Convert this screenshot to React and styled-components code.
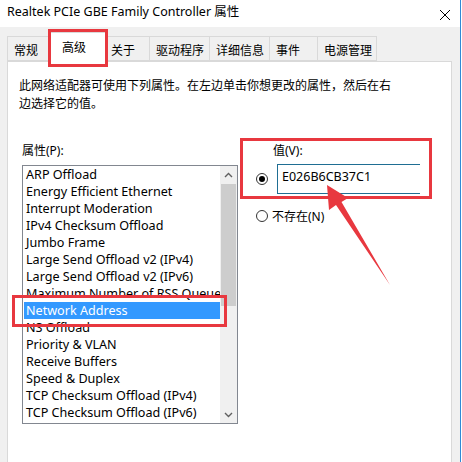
import React from "react";
import styled, { createGlobalStyle } from "styled-components";

const GlobalStyle = createGlobalStyle`
   html, body {
      margin: 0;
      padding: 0;
      background: #ffffff;
   }
   body {
      font-family: "Noto Sans", "Noto Sans CJK SC", sans-serif;
      font-size: 12px;
      color: #000000;
   }
`;

const Window = styled.div`
   position: relative;
   width: 460px;
   height: 462px;
   overflow: hidden;
   background-color: #f0f0f0;
   border-right: 1px solid #2f8ad6;
`;

const TitleBar = styled.div`
   height: 27px;
   background-color: #ffffff;
   display: flex;
   align-items: flex-start;
   justify-content: space-between;
   padding: 3px 0 0 7px;
   box-sizing: border-box;
`;

const Title = styled.div`
   font-size: 12.5px;
   line-height: 18px;
`;

const CloseButton = styled.div`
   width: 10px;
   height: 10px;
   margin: 4px 10px 0 0;
`;

const Body = styled.div`
   padding: 9px 8px 0 7px;
`;

const TabRow = styled.div`
   display: flex;
   align-items: flex-end;
   height: 25px;
   position: relative;
   z-index: 2;
`;

const Tab = styled.div`
   width: ${(p) => p.$w}px;
   box-sizing: border-box;
   height: ${(p) => (p.$active ? 30 : 25)}px;
   margin-bottom: ${(p) => (p.$active ? -1 : 0)}px;
   padding-left: ${(p) => (p.$active ? 11 : 6)}px;
   background-color: ${(p) => (p.$active ? "#ffffff" : "#f0f0f0")};
   border: 1px solid #d9d9d9;
   border-bottom: ${(p) => (p.$active ? "none" : "1px solid #d9d9d9")};
   border-left: ${(p) => (p.$first || p.$active ? "1px solid #d9d9d9" : "none")};
   line-height: ${(p) => (p.$active ? 30 : 25)}px;
   font-size: 12px;
   white-space: nowrap;
   padding-top: ${(p) => (p.$active ? 0 : 1)}px;
   ${(p) => (p.$active ? "margin-left: 1px; margin-right: -1px;" : "")}
`;

const Panel = styled.div`
   background-color: #ffffff;
   border: 1px solid #d9d9d9;
   height: 420px;
   padding: 15px 11px 0 11px;
`;

const Description = styled.p`
   margin: 0;
   font-size: 12px;
   line-height: 18px;
   width: 380px;
`;

const Columns = styled.div`
   display: grid;
   grid-template-columns: 216px 1fr;
   column-gap: 18px;
   margin-top: 30px;
   padding-left: 3px;
`;

const FieldLabel = styled.div`
   font-size: 12px;
   line-height: 18px;
   margin-left: ${(p) => p.$indent || 0}px;
   margin-bottom: ${(p) => p.$below ?? 5}px;
   margin-top: -1px;
`;

const ListBox = styled.div`
   position: relative;
   height: 259px;
   box-sizing: border-box;
   border: 1px solid #828790;
   overflow: hidden;
`;

const ListItem = styled.div`
   height: 17px;
   line-height: 17px;
   width: 194px;
   padding-left: 2px;
   margin-left: 1px;
   font-size: 12.6px;
   white-space: nowrap;
   overflow: hidden;
   background-color: ${(p) => (p.$selected ? "#3399ff" : "transparent")};
   color: ${(p) => (p.$selected ? "#ffffff" : "#000000")};
`;

const ScrollBar = styled.div`
   position: absolute;
   top: 0;
   right: 0;
   width: 17px;
   height: 100%;
   background-color: #f0f0f0;
   display: flex;
   flex-direction: column;
   align-items: center;
`;

const ScrollArrow = styled.div`
   height: 17px;
   width: 17px;
   display: flex;
   align-items: center;
   justify-content: center;
`;

const ScrollThumb = styled.div`
   width: 15px;
   height: 122px;
   margin-top: 1px;
   background-color: #cdcdcd;
`;

const ScrollTrack = styled.div`
   flex: 1;
`;

const ValueColumn = styled.div`
   display: flex;
   flex-direction: column;
`;

const RadioRow = styled.div`
   display: flex;
   align-items: center;
   gap: ${(p) => p.$gap || 0}px;
   margin-top: ${(p) => p.$top || 0}px;
`;

const Radio = styled.div`
   width: 12px;
   height: 12px;
   box-sizing: border-box;
   border: 1px solid #333333;
   border-radius: 50%;
   display: flex;
   align-items: center;
   justify-content: center;
   flex-shrink: 0;

   &::after {
      content: "";
      width: 6px;
      height: 6px;
      border-radius: 50%;
      background-color: ${(p) => (p.$checked ? "#000000" : "transparent")};
   }
`;

const TextBox = styled.div`
   width: 143px;
   height: 30px;
   box-sizing: border-box;
   border: 1px solid #1f6e93;
   border-right: none;
   padding: 2px 0 0 4px;
   line-height: 20px;
   font-size: 12.5px;
`;

const Highlight = styled.div`
   position: absolute;
   left: ${(p) => p.$x}px;
   top: ${(p) => p.$y}px;
   width: ${(p) => p.$w}px;
   height: ${(p) => p.$h}px;
   box-sizing: border-box;
   border: 3px solid #e8383f;
   z-index: 5;
   pointer-events: none;
`;

const ArrowLayer = styled.svg`
   position: absolute;
   left: 0;
   top: 0;
   z-index: 6;
   pointer-events: none;
`;

const tabs = [
   { name: "常规", w: 42 },
   { name: "高级", w: 56, active: true },
   { name: "关于", w: 45 },
   { name: "驱动程序", w: 60 },
   { name: "详细信息", w: 60 },
   { name: "事件", w: 48 },
   { name: "电源管理", w: 59 }
];

const properties = [
   "ARP Offload",
   "Energy Efficient Ethernet",
   "Interrupt Moderation",
   "IPv4 Checksum Offload",
   "Jumbo Frame",
   "Large Send Offload v2 (IPv4)",
   "Large Send Offload v2 (IPv6)",
   "Maximum Number of RSS Queues",
   "Network Address",
   "NS Offload",
   "Priority & VLAN",
   "Receive Buffers",
   "Speed & Duplex",
   "TCP Checksum Offload (IPv4)",
   "TCP Checksum Offload (IPv6)"
];

const Chevron = ({ up }) => (
   <svg width="9" height="6" viewBox="0 0 9 6">
      <path
         d={up ? "M1 5 L4.5 1.5 L8 5" : "M1 1 L4.5 4.5 L8 1"}
         fill="none"
         stroke="#606060"
         strokeWidth="1.4"
      />
   </svg>
);

export default function App() {
   return (
      <>
         <GlobalStyle />
         <Window>
            <TitleBar>
               <Title>Realtek PCIe GBE Family Controller 属性</Title>
               <CloseButton>
                  <svg width="10" height="10" viewBox="0 0 10 10">
                     <path
                        d="M0 0 L10 10 M10 0 L0 10"
                        stroke="#000"
                        strokeWidth="1"
                     />
                  </svg>
               </CloseButton>
            </TitleBar>

            <Body>
               <TabRow>
                  {tabs.map((t, i) => (
                     <Tab
                        key={t.name}
                        $w={t.w}
                        $active={t.active}
                        $first={i === 0}
                     >
                        {t.name}
                     </Tab>
                  ))}
               </TabRow>

               <Panel>
                  <Description>
                     此网络适配器可使用下列属性。在左边单击你想更改的属性，然后在右边选择它的值。
                  </Description>

                  <Columns>
                     <div>
                        <FieldLabel>属性(P):</FieldLabel>
                        <ListBox>
                           {properties.map((p) => (
                              <ListItem
                                 key={p}
                                 $selected={p === "Network Address"}
                              >
                                 {p}
                              </ListItem>
                           ))}
                           <ScrollBar>
                              <ScrollArrow>
                                 <Chevron up />
                              </ScrollArrow>
                              <ScrollThumb />
                              <ScrollTrack />
                              <ScrollArrow>
                                 <Chevron />
                              </ScrollArrow>
                           </ScrollBar>
                        </ListBox>
                     </div>

                     <ValueColumn>
                        <FieldLabel $indent={17} $below={4}>
                           值(V):
                        </FieldLabel>
                        <RadioRow $gap={9}>
                           <Radio $checked />
                           <TextBox>E026B6CB37C1</TextBox>
                        </RadioRow>
                        <RadioRow $gap={4} $top={13}>
                           <Radio />
                           <span>不存在(N)</span>
                        </RadioRow>
                     </ValueColumn>
                  </Columns>
               </Panel>
            </Body>

            <Highlight $x={48} $y={29} $w={60} $h={38} />
            <Highlight $x={240} $y={138} $w={192} $h={61} />
            <Highlight $x={12} $y={295} $w={215} $h={32} />

            <ArrowLayer width="462" height="462">
               <polygon
                  points="327,185 348,198 341.5,202 390,285 336,205 329,210"
                  fill="#e8383f"
               />
            </ArrowLayer>
         </Window>
      </>
   );
}
